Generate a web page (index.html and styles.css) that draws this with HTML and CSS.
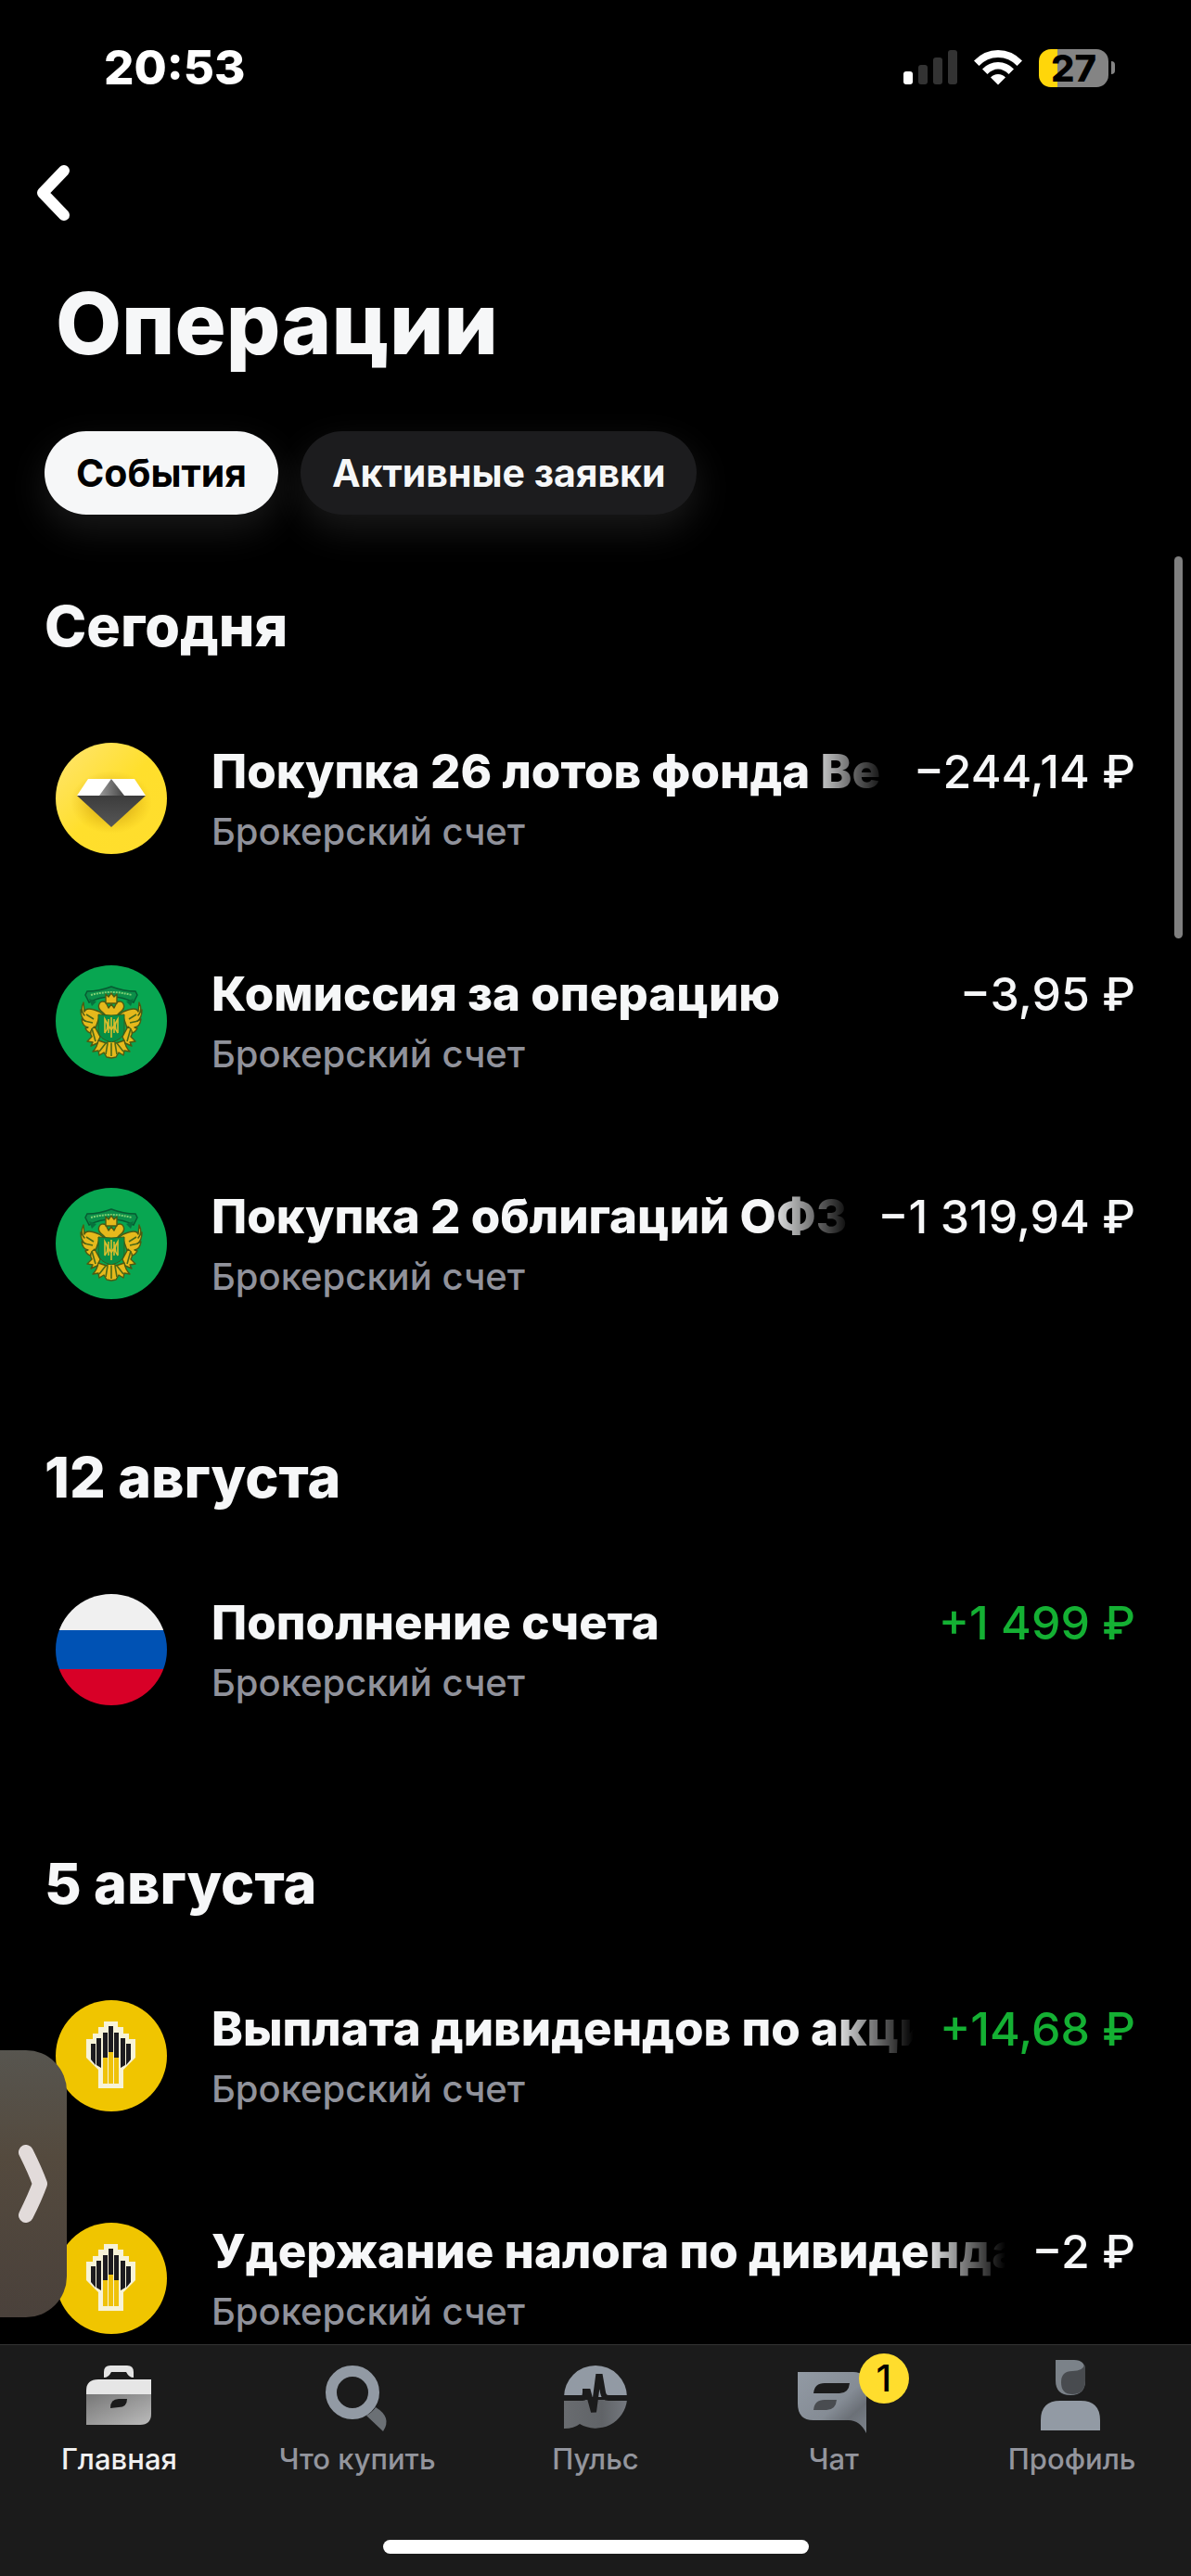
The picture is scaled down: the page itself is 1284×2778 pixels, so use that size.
FILE: index.html
```html
<!DOCTYPE html>
<html lang="ru">
<head>
<meta charset="utf-8">
<meta name="viewport" content="width=device-width, initial-scale=1">
<title>Операции</title>
<link rel="stylesheet" href="styles.css">
</head>
<body>
<svg class="sprite" aria-hidden="true">
  <defs>
    <linearGradient id="gold" x1="0" y1="0" x2="1" y2="1">
      <stop offset="0" stop-color="#ffe573"/><stop offset=".5" stop-color="#ffdf2c"/><stop offset="1" stop-color="#ffdd2d"/>
    </linearGradient>
    <radialGradient id="glow" cx=".5" cy=".5" r=".5">
      <stop offset=".3" stop-color="#c79a10" stop-opacity=".75"/><stop offset="1" stop-color="#e0b010" stop-opacity="0"/>
    </radialGradient>
    <linearGradient id="facet" x1="0" y1="0" x2="1" y2="0">
      <stop offset="0" stop-color="#999"/><stop offset=".6" stop-color="#666"/><stop offset="1" stop-color="#444"/>
    </linearGradient>
    <linearGradient id="pavilion" x1="0" y1="0" x2="0" y2="1">
      <stop offset="0" stop-color="#3c3c3c"/><stop offset="1" stop-color="#575757"/>
    </linearGradient>
    <linearGradient id="case" x1="0" y1="0" x2="1" y2="1">
      <stop offset="0" stop-color="#777"/><stop offset="1" stop-color="#bbb"/>
    </linearGradient>
    <linearGradient id="bubble" x1="0" y1="0" x2="1" y2="1">
      <stop offset="0" stop-color="#929aa4"/><stop offset=".55" stop-color="#858c95"/><stop offset=".75" stop-color="#6b7077"/><stop offset="1" stop-color="#7d848d"/>
    </linearGradient>
    <linearGradient id="low" x1="0" y1="0" x2="1" y2="0">
      <stop offset="0" stop-color="#696c70"/><stop offset=".6" stop-color="#606367"/><stop offset="1" stop-color="#74787e"/>
    </linearGradient>
    <symbol id="gem" viewBox="0 0 120 120">
      <circle cx="60" cy="60" r="60" fill="url(#gold)"/>
      <ellipse cx="60" cy="64" rx="44" ry="34" fill="url(#glow)"/>
      <path d="M35 39h50l12 18H23z" fill="#fff"/>
      <path d="M60 39l14 18H47z" fill="url(#facet)"/>
      <path d="M23 57h74L60 91z" fill="url(#pavilion)"/>
    </symbol>
    <symbol id="eagle" viewBox="0 0 120 120">
      <circle cx="60" cy="60" r="60" fill="#08a651"/>
      <path d="M34 28q13 0 26-5 13 5 26 5l2 4-4 8q-11-6-24-6t-24 6l-4-8z" fill="#0b8f49" stroke="#075b32" stroke-width="1.5"/>
      <path d="M38 32q22-6 44 0" fill="none" stroke="#7ccf72" stroke-width="2" stroke-dasharray="2 1"/>
      <path d="M36 36l8 3-5 5zM84 36l-8 3 5 5z" fill="#08703d"/>
      <g fill="#e6b91c" stroke="#4d5a12" stroke-width="1.4" stroke-linejoin="round">
        <path d="M47 50q-14-6-16 0l-1-10q-4 8 1 14l-4-6q0 9 5 12l-4-2q1 8 7 9l-3 1q3 6 9 5l6-17 7-1zM73 50q14-6 16 0l1-10q4 8-1 14l4-6q0 9-5 12l4-2q-1 8-7 9l3 1q-3 6-9 5l-6-17-7-1z"/>
        <path d="M51 51c-9-6-3-15 3-11l3 6 3-4 3 4 3-6c6-4 12 5 3 11l-4 4H55z"/>
        <path d="M42 66q-7 5-3 11l-5 5 6 1-2 4 7-3 3-7zM78 66q7 5 3 11l5 5-6 1 2 4-7-3-3-7z"/>
        <path d="M60 80l-5 4-9-3q-1 7-6 12l6-1 1 5 5-3 3 5 5 1 5-1 3-5 5 3 1-5 6 1q-5-5-6-12l-9 3z"/>
        <path d="M54 31l3 3 3-4 3 4 3-3v10H54z"/>
      </g>
      <path d="M60 84v14M54 84l-7 9M66 84l7 9M56 84l-2 12M64 84l2 12M33 53l8 5M87 53l-8 5M31 60l9 2M89 60l-9 2M39 68l4 14M81 68l-4 14" stroke="#4a6a18" stroke-width="1.6"/>
      <path d="M46 53q14 2 28 0v18q-1 9-14 12-13-3-14-12z" fill="#078f45" stroke="#315f1c" stroke-width="1"/>
      <path d="M53 59q6 6 0 14M53 73V58l7 12 7-12v15M67 59q-6 6 0 14M57 58v15M63 58v15M60 56v22" fill="none" stroke="#d9bd2c" stroke-width="1.6"/>
    </symbol>
    <symbol id="flag" viewBox="0 0 120 120">
      <clipPath id="disc"><circle cx="60" cy="60" r="60"/></clipPath>
      <g clip-path="url(#disc)"><path fill="#f0f0f0" d="M0 0h120v39H0z"/><path fill="#0052b4" d="M0 39h120v42H0z"/><path fill="#d80027" d="M0 81h120v39H0z"/></g>
    </symbol>
    <symbol id="tower" viewBox="0 0 120 120">
      <circle cx="60" cy="60" r="60" fill="#f0c500"/>
      <path d="M52 23h15v6h6v7h6v6h7v20L73 75v20H46V75L33 62V42h7v-6h6v-7h6z" fill="#f7f3d8"/>
      <path d="M38 47h5v23l-5-6zM44 41h5v32l-5-3zM51 35h5v27h-5zM57 28h5v28h-5zM63 35h5v27h-5zM70 41h5v29l-5 3zM76 47h5v17l-5 6z" fill="#1c1b1f"/>
      <path d="M51 62h5v28h-5zM57 56h5v34h-5zM63 62h5v28h-5z" fill="#efc20a"/>
    </symbol>
  </defs>
</svg>

<div class="app">
  <header class="status">
    <time class="clock">20:53</time>
    <div class="indicators">
      <svg width="58" height="38" viewBox="0 0 58 38"><rect y="23" width="10" height="14" rx="3" fill="#fff"/><g fill="#333"><rect x="16" y="16" width="10" height="21" rx="3"/><rect x="32" y="8" width="10" height="29" rx="3"/><rect x="48" width="10" height="37" rx="3"/></g></svg>
      <svg width="52" height="38" viewBox="0 0 52 38"><g fill="#fff"><path d="M0 11.500Q11 0 26 0t26 11.500l-5.500 5.500Q38 8 26 8T5.500 17z"/><path d="M9 20.500Q16 13 26 13t17 7.500L37.500 26Q32 20.500 26 20.500T14.500 26z"/><path d="M18 29.500Q21 26 26 26t8 3.500L26 37.500z"/></g></svg>
      <div class="battery"><span class="battery-level">27</span></div>
    </div>
  </header>

  <div class="toolbar">
    <button class="back" aria-label="Назад"><svg width="36" height="60" viewBox="0 0 36 60"><path d="M30 6L7 30l23 24" fill="none" stroke="#fff" stroke-width="12" stroke-linecap="round" stroke-linejoin="round"/></svg></button>
  </div>
  <h1 class="title">Операции</h1>
  <div class="chips">
    <button class="chip chip-active">События</button>
    <button class="chip">Активные заявки</button>
  </div>

  <main class="feed">
    <section class="day">
      <h2>Сегодня</h2>
      <ul>
        <li class="op"><svg class="logo"><use href="#gem"/></svg><span class="name">Покупка 26 лотов фонда Ве</span><span class="sum">−244,14 ₽</span><span class="account">Брокерский счет</span></li>
        <li class="op"><svg class="logo"><use href="#eagle"/></svg><span class="name">Комиссия за операцию</span><span class="sum">−3,95 ₽</span><span class="account">Брокерский счет</span></li>
        <li class="op"><svg class="logo"><use href="#eagle"/></svg><span class="name">Покупка 2 облигаций ОФЗ</span><span class="sum">−1 319,94 ₽</span><span class="account">Брокерский счет</span></li>
      </ul>
    </section>
    <section class="day">
      <h2>12 августа</h2>
      <ul>
        <li class="op"><svg class="logo"><use href="#flag"/></svg><span class="name">Пополнение счета</span><span class="sum income">+1 499 ₽</span><span class="account">Брокерский счет</span></li>
      </ul>
    </section>
    <section class="day">
      <h2>5 августа</h2>
      <ul>
        <li class="op"><svg class="logo"><use href="#tower"/></svg><span class="name">Выплата дивидендов по акци</span><span class="sum income">+14,68 ₽</span><span class="account">Брокерский счет</span></li>
        <li class="op"><svg class="logo"><use href="#tower"/></svg><span class="name">Удержание налога по дивиденда</span><span class="sum">−2 ₽</span><span class="account">Брокерский счет</span></li>
      </ul>
    </section>
  </main>

  <footer class="bottom">
    <nav class="tabs">
      <a class="tab tab-active" href="#main"><svg width="80" height="88" viewBox="0 0 80 88"><path d="M24 26v-6q0-7 7-7h18q7 0 7 7v6q-5 0-8-6H32q-3 6-8 6z" fill="#e4e4e4"/><path d="M5 44V40Q5 28 18 28h57v16z" fill="#e6e6e6"/><path d="M5 44h70v21q0 12-12 12H5z" fill="url(#case)"/><path d="M31 59q0-10 9-10h9q0 9-9 9z" fill="#1b1b1b"/></svg><span>Главная</span></a>
      <a class="tab" href="#buy"><svg width="80" height="88" viewBox="0 0 80 88"><path d="M50 67q7-4 10-9 18 11 8 26z" fill="#6b7075"/><circle cx="35" cy="42" r="23" fill="none" stroke="#929aa4" stroke-width="12"/></svg><span>Что купить</span></a>
      <a class="tab" href="#pulse"><svg width="80" height="88" viewBox="0 0 80 88"><path d="M6 47a34 34 0 0 1 68 0z" fill="#929aa4"/><path d="M6 50h68a34 34 0 0 1-51 26q-6 5-17 5z" fill="url(#low)"/><path d="M2 48h24q3 0 3-7h3l6 22 5-38h2l3 17q1 6 6 6h24" fill="none" stroke="#1b1b1b" stroke-width="6"/></svg><span>Пульс</span></a>
      <a class="tab" href="#chat"><span class="icon-wrap"><svg width="80" height="88" viewBox="0 0 80 88"><path d="M1 20h60q14 0 14 14v52Q68 72 56 72H18Q1 72 1 54z" fill="url(#bubble)"/><path d="M18 43q1-11 12-11h27q-1 11-11 11z" fill="#1b1b1b"/><path d="M18 61q1-11 12-11h13q-1 11-11 11z" fill="#494c50"/></svg><span class="badge">1</span></span><span>Чат</span></a>
      <a class="tab" href="#profile"><svg width="80" height="88" viewBox="0 0 80 88"><path d="M22 7h20q12 0 12 12v10q0 16-16 16T22 29z" fill="#7b8289"/><path d="M28 31q0-12 12-12 12 0 13-7 1 2 1 5v12q0 15-14 15-12 0-12-13z" fill="#484b4f"/><path d="M6 83V72q0-21 21-21h22q21 0 21 21v11z" fill="#929aa4"/></svg><span>Профиль</span></a>
    </nav>
    <div class="home-bar"></div>
  </footer>

  <div class="scroll-thumb"></div>
  <button class="drawer" aria-label="Открыть панель"><svg width="32" height="84" viewBox="0 0 32 84"><path d="M8 8q10 20 15 34Q18 56 8 76" fill="none" stroke="#e2dbda" stroke-width="16" stroke-linecap="round" stroke-linejoin="round"/></svg></button>
</div>
</body>
</html>
```
FILE: styles.css
```css
* { box-sizing: border-box; }

body {
  margin: 0;
  background: #000;
  color: #f6f7f8;
  font-family: Inter, "Liberation Sans", sans-serif;
}

button { border: 0; padding: 0; font: inherit; color: inherit; background: none; }
ul { list-style: none; margin: 0; padding: 0; }
h1, h2 { margin: 0; font-weight: 800; }
.sprite { position: absolute; width: 0; height: 0; }

.app {
  position: relative;
  display: flex;
  flex-direction: column;
  height: 100vh;
  overflow: hidden;
}

.status {
  display: flex;
  flex: none;
  align-items: center;
  justify-content: space-between;
  padding: 42px 82px 42px 112px;
}
.clock { font-size: 51px; line-height: 62px; font-weight: 800; color: #fff; }
.indicators { display: flex; align-items: center; gap: 18px; }
.indicators svg { display: block; }

.battery { display: flex; align-items: center; gap: 3px; }
.battery-level {
  width: 75px;
  border-radius: 13px;
  background: linear-gradient(90deg, #ffd60a 20px, #848484 20px);
  color: #000;
  font-size: 40px;
  line-height: 41px;
  font-weight: 800;
  text-align: center;
}
.battery::after {
  content: "";
  width: 4px;
  height: 14px;
  border-radius: 0 4px 4px 0;
  background: #848484;
}

.toolbar { flex: none; padding: 32px 39px; }
.back { display: block; }
.back svg { display: block; }

.title {
  flex: none;
  padding: 26px 60px 0;
  font-size: 92px;
  line-height: 106px;
}

.chips { display: flex; flex: none; gap: 24px; padding: 63px 48px 0; }
.chip {
  padding: 0 34px;
  border-radius: 45px;
  background: #1c1c1e;
  box-shadow: 0 16px 40px rgba(255, 255, 255, .1);
  font-size: 41px;
  line-height: 90px;
  font-weight: 700;
}
.chip-active { background: #f6f7f8; color: #000; }

.feed { flex: 1; min-height: 0; overflow: hidden; padding-top: 85px; }
.day + .day { margin-top: 97px; }
.day h2 {
  padding: 0 48px;
  margin-bottom: 31px;
  font-size: 61px;
  line-height: 70px;
}

.op {
  display: grid;
  grid-template-columns: 120px minmax(0, 1fr) auto;
  grid-template-rows: 62px 68px;
  column-gap: 28px;
  height: 240px;
  padding: 60px 60px 0;
}
.logo { grid-row: 1 / 3; width: 120px; height: 120px; }
.name {
  margin-left: 20px;
  overflow: hidden;
  white-space: nowrap;
  font-size: 51px;
  line-height: 62px;
  font-weight: 800;
  mask-image: linear-gradient(90deg, #000 calc(100% - 90px), transparent);
}
.sum { font-size: 50px; line-height: 62px; font-weight: 500; white-space: nowrap; }
.income { color: #14b033; }
.account {
  grid-column: 2 / 4;
  margin-left: 20px;
  color: #90929b;
  font-size: 40px;
  line-height: 68px;
  font-weight: 500;
}

.bottom {
  display: flex;
  flex: none;
  flex-direction: column;
  align-items: center;
  padding-bottom: 24px;
  border-top: 1px solid #333;
  background: #1b1b1b;
}
.tabs { display: grid; grid-template-columns: repeat(5, 1fr); width: 100%; }
.tab {
  display: flex;
  flex-direction: column;
  align-items: center;
  padding: 9px 0 62px;
  color: #93959d;
  font-size: 31px;
  line-height: 51px;
  font-weight: 500;
  text-decoration: none;
}
.tab svg { display: block; }
.tab-active { color: #f0f0f0; }
.icon-wrap { position: relative; }
.badge {
  position: absolute;
  top: 0;
  left: 67px;
  width: 54px;
  border-radius: 50%;
  background: #ffdd2d;
  color: #000;
  font-size: 40px;
  line-height: 54px;
  text-align: center;
}
.home-bar { width: 459px; height: 15px; border-radius: 8px; background: #fff; }

.scroll-thumb {
  position: absolute;
  top: 600px;
  right: 9px;
  width: 9px;
  height: 412px;
  border-radius: 5px;
  background: #808080;
}
.drawer {
  position: absolute;
  left: 0;
  bottom: 279px;
  width: 72px;
  height: 288px;
  padding-left: 20px;
  border-radius: 0 44px 44px 0;
  background: linear-gradient(#57554f, #544a3e 40%, #4a413b);
}
.drawer svg { display: block; }
```
